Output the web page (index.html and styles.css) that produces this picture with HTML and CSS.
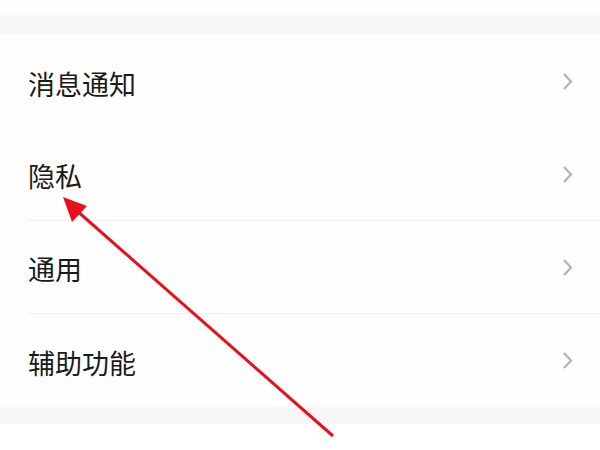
FILE: index.html
```html
<!DOCTYPE html>
<html lang="zh">
<head>
<meta charset="utf-8">
<link rel="stylesheet" href="styles.css">
</head>
<body>
<div class="page">
  <div class="top-space"></div>
  <div class="gap"></div>
  <div class="list">
    <div class="row"><span class="label">消息通知</span><svg class="chev" viewBox="0 0 11 19"><path d="M2 2 L9 9.5 L2 17" /></svg></div>
    <div class="row divided"><span class="label">隐私</span><svg class="chev" viewBox="0 0 11 19"><path d="M2 2 L9 9.5 L2 17" /></svg></div>
    <div class="row divided"><span class="label">通用</span><svg class="chev" viewBox="0 0 11 19"><path d="M2 2 L9 9.5 L2 17" /></svg></div>
    <div class="row"><span class="label">辅助功能</span><svg class="chev" viewBox="0 0 11 19"><path d="M2 2 L9 9.5 L2 17" /></svg></div>
  </div>
  <div class="gap bottom"></div>
  <svg class="arrow" viewBox="0 0 600 450" width="600" height="450">
    <line x1="333" y1="436" x2="76" y2="210" />
    <polygon points="63,197 87,206 72,222" />
  </svg>
</div>
</body>
</html>
```
FILE: styles.css
```css
html, body {
  margin: 0;
  padding: 0;
  background: #ffffff;
}
.page {
  position: relative;
  width: 600px;
  height: 450px;
  overflow: hidden;
  font-family: "Noto Sans CJK SC", "Noto Sans", sans-serif;
  background: #ffffff;
}
.top-space {
  height: 15px;
  background: #fdfdfd;
}
.gap {
  height: 19px;
  background: #f7f7f7;
}
.gap.bottom {
  height: 17px;
}
.list {
  background: #fefefe;
  padding-top: 1px;
}
.row {
  position: relative;
  height: 93px;
  display: flex;
  align-items: center;
  justify-content: space-between;
  padding: 0 27px 0 28px;
  box-sizing: border-box;
}
.row.divided {
  border-bottom: 1px solid #f0f0f0;
  margin-left: 28px;
  padding-left: 0;
}
.label {
  font-size: 27px;
  color: #1a1a1a;
  line-height: 1;
  padding-top: 3px;
}
.chev {
  width: 11px;
  height: 19px;
  fill: none;
  stroke: #b3b3b3;
  stroke-width: 2.2;
}
.arrow {
  position: absolute;
  left: 0;
  top: 0;
}
.arrow line {
  stroke: #e8101a;
  stroke-width: 3;
}
.arrow polygon {
  fill: #e8101a;
}
```
